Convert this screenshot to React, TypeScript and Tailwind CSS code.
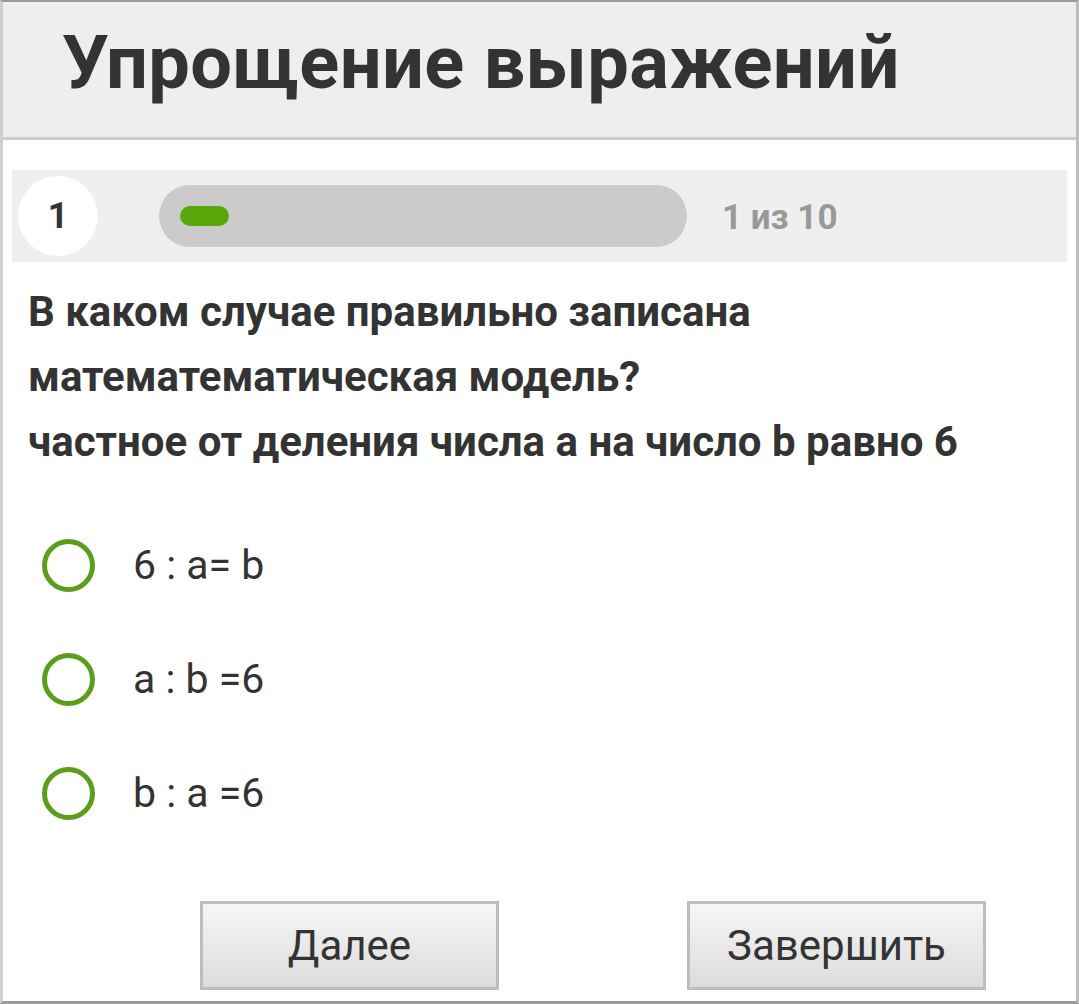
import React from "react";

const options = ["6 : a= b", "a : b =6", "b : a =6"];

export default function App() {
  return (
    <div
      className="w-[1079px] h-[1004px] bg-white flex flex-col border-t-2 border-t-[#9a9a9a] border-l-[3px] border-l-[#cfcfcf] border-r-[3px] border-r-[#bdbdbd] border-b-[3px] border-b-[#9a9a9a] overflow-hidden"
      style={{ fontFamily: "Roboto, 'Noto Sans', sans-serif" }}
    >
      <div className="h-[138px] shrink-0 bg-[#eeeeee] border-b-[3px] border-b-[#cccccc] flex items-center pl-[59px] pb-[14px]">
        <h1 className="text-[74px] font-bold text-[#333333] leading-none tracking-[0.4px]">
          Упрощение выражений
        </h1>
      </div>

      <div className="mt-[30px] mx-[9px] h-[92px] bg-[#efefef] flex items-center">
        <div className="ml-[6px] w-[80px] h-[80px] rounded-full bg-white flex items-center justify-center text-[36px] font-bold text-[#333333]">
          1
        </div>
        <div className="ml-[61px] w-[528px] h-[62px] rounded-full bg-[#cbcbcb] flex items-center pl-[21px]">
          <div className="w-[49px] h-[20px] rounded-full bg-[#58a80a]" />
        </div>
        <div className="ml-[35px] text-[35px] font-bold text-[#999999] pt-[4px]">1 из 10</div>
      </div>

      <div className="mt-[17px] pl-[25px] text-[42px] font-bold text-[#333333] leading-[65px]">
        <div>В каком случае правильно записана</div>
        <div>математематическая модель?</div>
        <div>частное от деления числа a на число b равно 6</div>
      </div>

      <div className="mt-[65px] pl-[39px] flex flex-col gap-[61px]">
        {options.map((o) => (
          <div key={o} className="flex items-center h-[53px]">
            <div className="w-[53px] h-[53px] rounded-full border-[5px] border-[#5c9e1c] bg-white shrink-0" />
            <div className="ml-[38px] text-[41px] text-[#333333] leading-none">{o}</div>
          </div>
        ))}
      </div>

      <div className="mt-auto mb-[11px] flex pl-[197px] gap-[188px]">
        {["Далее", "Завершить"].map((b) => (
          <button
            key={b}
            className="w-[299px] h-[89px] border-[3px] border-[#bdbdbd] bg-gradient-to-b from-[#f6f6f6] to-[#dcdcdc] flex items-center justify-center text-[42px] text-[#333333]"
            style={{ fontFamily: "Roboto, 'Liberation Sans', sans-serif" }}
          >
            {b}
          </button>
        ))}
      </div>
    </div>
  );
}
